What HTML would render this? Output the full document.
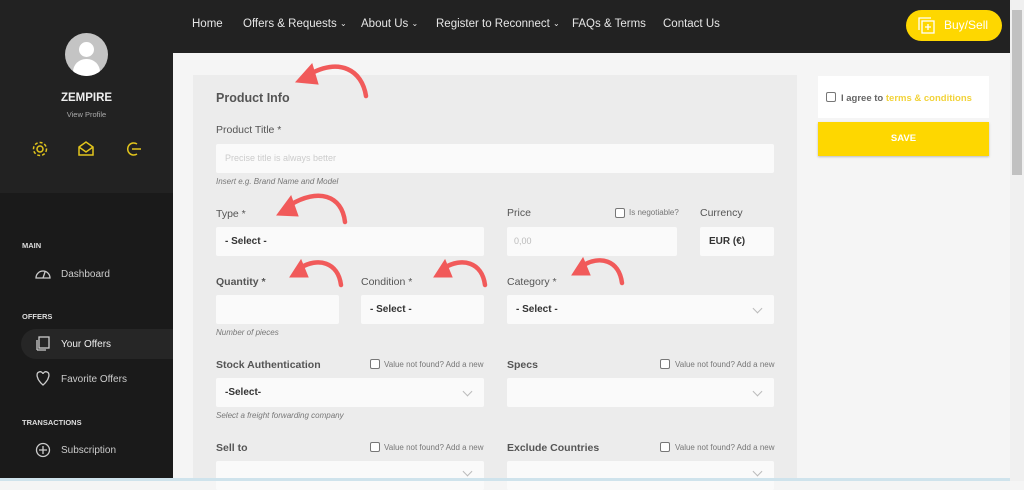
<!DOCTYPE html>
<html><head><meta charset="utf-8"><style>
*{margin:0;padding:0;box-sizing:border-box}
body{width:1024px;height:481px;overflow:hidden;background:#f5f5f5;font-family:"Liberation Sans",sans-serif;position:relative}
.a{position:absolute}
.side{left:0;top:0;width:173px;height:481px;background:#1a1a1a}
.sideTop{left:0;top:0;width:173px;height:193px;background:#222}
.top{left:173px;top:0;width:837px;height:53px;background:#222}
.nav{top:18px;color:#e6e6e6;font-size:11.5px}
.nav i{font-style:normal;font-size:8px;position:relative;top:-1px}
.card{left:193px;top:75px;width:604px;height:406px;background:#ececec}
.lbl{font-size:10.5px;color:#555;font-weight:bold}
.inp{background:#fafafa;height:29px;border-radius:2px}
.sel{font-size:10px;font-weight:bold;color:#333;padding:9px 0 0 9px}
.help{font-size:8px;color:#777;font-style:italic}
.cb{width:10px;height:10px;border:1px solid #777;border-radius:2px;background:#fff}
.small{font-size:8px;color:#777}
.chev{width:7px;height:7px;border-right:1px solid #bbb;border-bottom:1px solid #bbb;transform:rotate(45deg)}
.sec{font-size:7.5px;color:#ddd;font-weight:bold;left:22px}
.item{font-size:10px;color:#ccc;left:61px}
</style></head><body>
<div class="a side"></div><div class="a sideTop"></div>
<div class="a" style="left:65px;top:33px;width:43px;height:43px;border-radius:50%;background:#c4c4c4;overflow:hidden">
<div class="a" style="left:14px;top:9px;width:15px;height:15px;border-radius:50%;background:#fff"></div>
<div class="a" style="left:8px;top:26px;width:27px;height:22px;border-radius:13px 13px 0 0;background:#fff"></div></div>
<div class="a" style="left:0;width:173px;top:92px;text-align:center;color:#eee;font-weight:bold;font-size:11.5px">ZEMPIRE</div>
<div class="a" style="left:0;width:173px;top:110px;text-align:center;color:#aaa;font-size:7.5px">View Profile</div>
<svg class="a" style="left:32px;top:141px" width="110" height="18" fill="none" stroke="#e2c51c" stroke-width="1.5">
<circle cx="8" cy="8" r="3"/><circle cx="8" cy="8" r="6.5" stroke-dasharray="3 2"/>
<path d="M47 6 L54 1 L61 6 V14 H47 Z M47 6 L54 11 L61 6"/>
<path d="M111 3 A6 6 0 1 0 111 13" transform="translate(-6 0)"/><path d="M100 8 H109"/></svg>
<div class="a sec" style="top:241px">MAIN</div>
<div class="a sec" style="top:312px">OFFERS</div>
<div class="a sec" style="top:418px">TRANSACTIONS</div>
<div class="a" style="left:21px;top:329px;width:152px;height:30px;background:#262626;border-radius:15px 0 0 15px"></div>
<svg class="a" style="left:34px;top:265px" width="20" height="195" fill="none" stroke="#ccc" stroke-width="1.3">
<path d="M2 13 A7 7 0 1 1 16 13 Z M9 13 L11 7"/>
<rect x="5" y="72" width="10" height="11"/><path d="M3 85 V75 M3 85 H12"/>
<path d="M9 120 C2 114 2 108 5 107 C7 106 9 108 9 109 C9 108 11 106 13 107 C16 108 16 114 9 120Z"/>
<circle cx="9" cy="185" r="6.5"/><path d="M9 181 V189 M5 185 H13"/></svg>
<div class="a item" style="top:269px">Dashboard</div>
<div class="a item" style="top:339px;color:#eee">Your Offers</div>
<div class="a item" style="top:374px">Favorite Offers</div>
<div class="a item" style="top:445px">Subscription</div>

<div class="a top"></div>
<div class="a nav" style="left:192px">Home</div>
<div class="a nav" style="left:243px">Offers &amp; Requests <i>⌄</i></div>
<div class="a nav" style="left:361px">About Us <i>⌄</i></div>
<div class="a nav" style="left:436px">Register to Reconnect <i>⌄</i></div>
<div class="a nav" style="left:572px">FAQs &amp; Terms</div>
<div class="a nav" style="left:663px">Contact Us</div>
<div class="a" style="left:906px;top:10px;width:96px;height:31px;border-radius:16px;background:#fed700"></div>
<svg class="a" style="left:918px;top:17px" width="18" height="18" fill="none" stroke="#fff" stroke-width="1.3"><rect x="4" y="4" width="12" height="12"/><path d="M1 13 V1 H13 M10 7 V13 M7 10 H13"/></svg>
<div class="a" style="left:944px;top:18px;color:#fff;font-size:12px">Buy/Sell</div>
<div class="a" style="left:1010px;top:0;width:14px;height:481px;background:#f0f0f0"></div>
<div class="a" style="left:1012px;top:10px;width:10px;height:165px;background:#c1c1c1"></div>

<div class="a card"></div>
<div class="a" style="left:216px;top:91px;font-size:12.5px;font-weight:bold;color:#555">Product Info</div>
<div class="a lbl" style="left:216px;top:124px;font-weight:normal">Product Title *</div>
<div class="a inp" style="left:216px;top:144px;width:558px;font-size:9px;color:#ccc;padding:9px 0 0 9px">Precise title is always better</div>
<div class="a help" style="left:216px;top:177px">Insert e.g. Brand Name and Model</div>

<div class="a lbl" style="left:216px;top:208px;font-weight:normal">Type *</div>
<div class="a inp sel" style="left:216px;top:227px;width:268px">- Select -</div>
<div class="a lbl" style="left:507px;top:207px;font-weight:normal">Price</div>
<div class="a cb" style="left:615px;top:208px"></div><div class="a small" style="left:629px;top:208px">Is negotiable?</div>
<div class="a lbl" style="left:700px;top:207px;font-weight:normal">Currency</div>
<div class="a inp" style="left:507px;top:227px;width:170px;font-size:9px;color:#bbb;padding:9px 0 0 7px">0,00</div>
<div class="a inp sel" style="left:700px;top:227px;width:74px">EUR (€)</div>

<div class="a lbl" style="left:216px;top:276px">Quantity *</div>
<div class="a lbl" style="left:361px;top:276px;font-weight:normal">Condition *</div>
<div class="a lbl" style="left:507px;top:276px;font-weight:normal">Category *</div>
<div class="a inp" style="left:216px;top:295px;width:123px"></div>
<div class="a inp sel" style="left:361px;top:295px;width:123px">- Select -</div>
<div class="a inp sel" style="left:507px;top:295px;width:267px">- Select -</div>
<div class="a chev" style="left:754px;top:305px"></div>
<div class="a help" style="left:216px;top:328px">Number of pieces</div>

<div class="a lbl" style="left:216px;top:359px">Stock Authentication</div>
<div class="a cb" style="left:370px;top:359px"></div><div class="a small" style="left:384px;top:360px">Value not found? Add a new</div>
<div class="a lbl" style="left:507px;top:359px">Specs</div>
<div class="a cb" style="left:660px;top:359px"></div><div class="a small" style="left:675px;top:360px">Value not found? Add a new</div>
<div class="a inp sel" style="left:216px;top:378px;width:268px">-Select-</div>
<div class="a chev" style="left:464px;top:388px"></div>
<div class="a inp" style="left:507px;top:378px;width:267px"></div>
<div class="a chev" style="left:754px;top:388px"></div>
<div class="a help" style="left:216px;top:411px">Select a freight forwarding company</div>

<div class="a lbl" style="left:216px;top:442px">Sell to</div>
<div class="a cb" style="left:370px;top:442px"></div><div class="a small" style="left:384px;top:443px">Value not found? Add a new</div>
<div class="a lbl" style="left:507px;top:442px">Exclude Countries</div>
<div class="a cb" style="left:660px;top:442px"></div><div class="a small" style="left:675px;top:443px">Value not found? Add a new</div>
<div class="a inp" style="left:216px;top:461px;width:268px"></div>
<div class="a chev" style="left:464px;top:468px"></div>
<div class="a inp" style="left:507px;top:461px;width:267px"></div>
<div class="a chev" style="left:754px;top:468px"></div>
<div class="a" style="left:0;top:478px;width:1010px;height:3px;background:#cfe3ec"></div>

<div class="a" style="left:818px;top:76px;width:171px;height:42px;background:#fff"></div>
<div class="a cb" style="left:826px;top:92px"></div>
<div class="a" style="left:841px;top:93px;font-size:9.5px;color:#666;font-weight:bold">I agree to <span style="color:#f2d33a">terms &amp; conditions</span></div>
<div class="a" style="left:818px;top:122px;width:171px;height:34px;background:#fed700;box-shadow:0 1px 2px #bbb;color:#fff;font-size:9.5px;font-weight:bold;text-align:center;line-height:34px">SAVE</div>

<svg class="a" style="left:0;top:0" width="1024" height="481" fill="none" stroke="#f15a5a" stroke-width="4.5" stroke-linecap="round">
<path d="M366 96 C362 70 340 58 310 74"/><path d="M296 82 L312 64 L318 84 Z" fill="#f15a5a" stroke-width="1"/>
<path d="M345 222 C342 195 318 188 290 205"/><path d="M277 215 L291 196 L298 216 Z" fill="#f15a5a" stroke-width="1"/>
<path d="M341 285 C338 262 318 257 300 268"/><path d="M290 277 L301 260 L308 277 Z" fill="#f15a5a" stroke-width="1"/>
<path d="M485 285 C482 262 462 257 444 268"/><path d="M434 277 L445 260 L452 277 Z" fill="#f15a5a" stroke-width="1"/>
<path d="M622 283 C619 260 600 255 582 266"/><path d="M572 275 L583 258 L590 275 Z" fill="#f15a5a" stroke-width="1"/>
</svg>
</body></html>
